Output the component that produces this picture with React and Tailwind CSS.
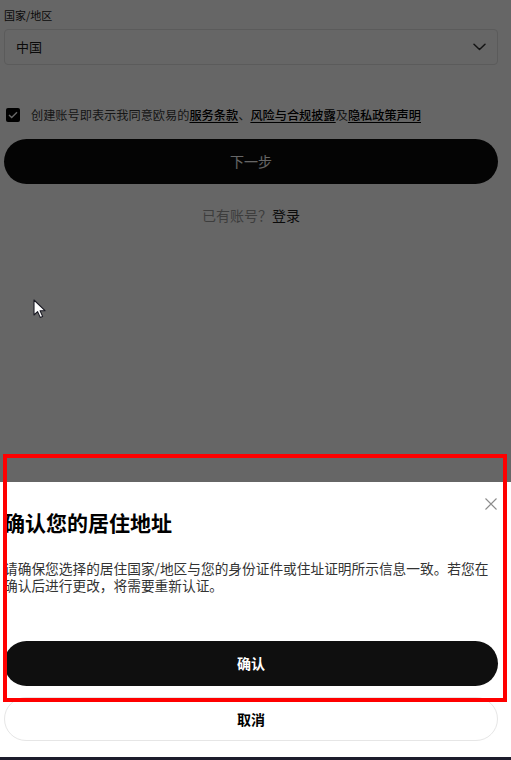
import React from 'react';

const Chevron = () => (
  <svg width="13" height="8" viewBox="0 0 13 8" fill="none">
    <path d="M1 1.2l5.5 5.3 5.5-5.3" stroke="#333" strokeWidth="1.5" strokeLinecap="round" strokeLinejoin="round" />
  </svg>
);

const CloseIcon = () => (
  <svg width="12" height="12" viewBox="0 0 12 12" fill="none">
    <path d="M0.5 0.5l11 11M11.5 0.5l-11 11" stroke="#8c8c8c" strokeWidth="1.1" />
  </svg>
);

const Cursor = () => (
  <svg width="14" height="20" viewBox="0 0 14 20" fill="none">
    <path d="M1 1v15l3.6-3.4 2.6 5.8 2.4-1-2.5-5.7H12L1 1z" fill="#fff" stroke="#1a1a24" strokeWidth="1.1" strokeLinejoin="round" />
  </svg>
);

export default function App() {
  return (
    <div
      className="relative h-[760px] w-full overflow-hidden bg-white"
      style={{ fontFamily: '"Noto Sans CJK SC", "Noto Sans", sans-serif' }}
    >
      {/* page behind the sheet */}
      <div className="pl-1 pr-[13px] pt-[7px]">
        <p className="text-[11px] leading-4 text-[#1a1a1a]">国家/地区</p>
        <div className="mt-[6px] flex h-9 items-center justify-between rounded-[4px] border border-[#e3e3e3] pl-[11px] pr-[11px]">
          <span className="text-[13px] text-[#1a1a1a]">中国</span>
          <Chevron />
        </div>

        <div className="mt-[40px] flex h-5 items-center">
          <span className="ml-[2px] flex h-[14px] w-[14px] items-center justify-center rounded-[2px] bg-black">
            <svg width="10" height="8" viewBox="0 0 10 8" fill="none">
              <path d="M1 4l2.7 2.6L9 1.2" stroke="#fff" strokeWidth="1.4" />
            </svg>
          </span>
          <p className="ml-[11px] whitespace-nowrap text-[12.2px] text-[#3a3a3a]">
            创建账号即表示我同意欧易的
            <span className="font-medium text-black underline underline-offset-2">服务条款</span>、
            <span className="font-medium text-black underline underline-offset-2">风险与合规披露</span>及
            <span className="font-medium text-black underline underline-offset-2">隐私政策声明</span>
          </p>
        </div>

        <button className="mt-[14px] flex h-[45px] w-full items-center justify-center rounded-full bg-[#0b0b0b] text-[14px] text-white">
          下一步
        </button>

        <p className="mt-[21px] text-center text-[14px] leading-5">
          <span className="text-[#999]">已有账号？</span>
          <span className="text-[#1a1a1a]">登录</span>
        </p>
      </div>

      {/* dim backdrop */}
      <div className="absolute inset-0 bg-black/60" />

      <div className="absolute left-[33px] top-[299px]">
        <Cursor />
      </div>

      {/* bottom sheet */}
      <div className="absolute bottom-0 left-0 right-0 top-[482px] bg-white pl-1 pr-[13px]">
        <button className="absolute right-[14px] top-[16px]">
          <CloseIcon />
        </button>
        <h2 className="pt-[26px] text-[21px] font-bold leading-[28px] text-black">确认您的居住地址</h2>
        <p className="mt-[24px] text-[13.7px] leading-[17px] text-[#333]">
          请确保您选择的居住国家/地区与您的身份证件或住址证明所示信息一致。若您在确认后进行更改，将需要重新认证。
        </p>
        <button className="mt-[47px] flex h-[45px] w-full items-center justify-center rounded-full bg-[#0f0f0f] text-[14px] font-bold text-white">
          确认
        </button>
        <button className="mt-[11px] flex h-[44px] w-full items-center justify-center rounded-full border border-[#e6e6e6] bg-white text-[14px] font-bold text-black">
          取消
        </button>
      </div>

      <div className="absolute bottom-0 left-0 right-0 h-[3px] bg-[#1c1c2c]" />

      {/* annotation frame */}
      <div className="absolute left-[3px] top-[454px] h-[248px] w-[504px] border-4 border-[#ff0000]" />
    </div>
  );
}
